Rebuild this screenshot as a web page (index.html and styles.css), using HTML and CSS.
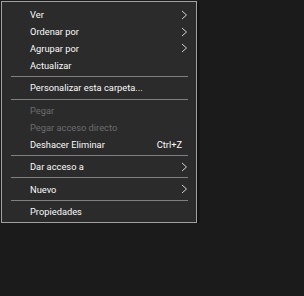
FILE: index.html
```html
<!DOCTYPE html>
<html lang="es">
<head>
    <meta charset="UTF-8">
    <link rel="stylesheet" href="styles.css">
</head>
<body>
    <div class="menu">
        <div class="item">Ver<svg class="arrow" viewBox="0 0 7 10"><path d="M1 1 L5.5 5 L1 9"/></svg></div>
        <div class="item">Ordenar por<svg class="arrow" viewBox="0 0 7 10"><path d="M1 1 L5.5 5 L1 9"/></svg></div>
        <div class="item">Agrupar por<svg class="arrow" viewBox="0 0 7 10"><path d="M1 1 L5.5 5 L1 9"/></svg></div>
        <div class="item">Actualizar</div>
        <div class="sep"></div>
        <div class="item">Personalizar esta carpeta...</div>
        <div class="sep"></div>
        <div class="item disabled">Pegar</div>
        <div class="item disabled">Pegar acceso directo</div>
        <div class="item">Deshacer Eliminar<span class="shortcut">Ctrl+Z</span></div>
        <div class="sep"></div>
        <div class="item">Dar acceso a<svg class="arrow" viewBox="0 0 7 10"><path d="M1 1 L5.5 5 L1 9"/></svg></div>
        <div class="sep"></div>
        <div class="item">Nuevo<svg class="arrow" viewBox="0 0 7 10"><path d="M1 1 L5.5 5 L1 9"/></svg></div>
        <div class="sep"></div>
        <div class="item">Propiedades</div>
    </div>
</body>
</html>
```

FILE: styles.css
```css
body {
    margin: 0;
    background: #1b1b1b;
    font-family: Roboto, "Noto Sans", sans-serif;
    font-size: 9.3px;
}

.menu {
    width: 194px;
    margin: 1px 0 0 1px;
    padding: 4.5px 0 2px 0;
    background: #2b2b2b;
    border: 1px solid #a0a0a0;
    box-shadow: 2px 2px 2px rgba(0, 0, 0, 0.4);
}

.item {
    height: 16.8px;
    display: flex;
    align-items: center;
    padding: 0 8px 0 28px;
    color: #fafafa;
}

.item.disabled {
    color: #6d6d6d;
}

.shortcut {
    margin-left: auto;
    margin-right: 6px;
}

.arrow {
    margin-left: auto;
    width: 7px;
    height: 10px;
}

.arrow path {
    fill: none;
    stroke: #d0d0d0;
    stroke-width: 1;
}

.sep {
    height: 1px;
    margin: 2.4px 8px 2.4px 9px;
    background: #808080;
}
```
